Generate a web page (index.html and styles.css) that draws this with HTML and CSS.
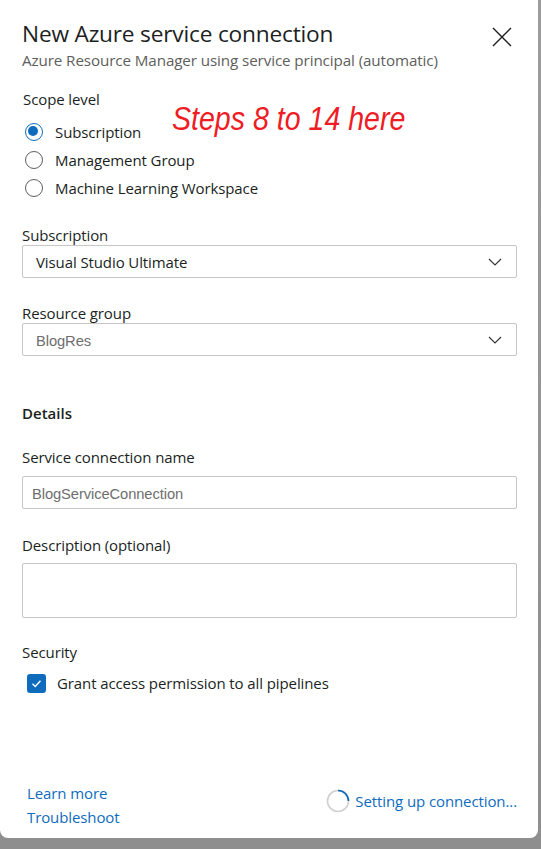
FILE: index.html
```html
<!DOCTYPE html>
<html>
<head>
<meta charset="utf-8">
<link rel="stylesheet" href="styles.css">
</head>
<body>
<div class="panel">
  <div class="header">
    <div class="titles">
      <h1 class="title">New Azure service connection</h1>
      <div class="subtitle">Azure Resource Manager using service principal (automatic)</div>
    </div>
    <svg class="close" width="20" height="20" viewBox="0 0 20 20"><path d="M1 1 L19 19 M19 1 L1 19" stroke="#201f1e" stroke-width="1.4" fill="none"/></svg>
  </div>

  <div class="scope">
    <div class="label scope-label">Scope level</div>
    <div class="annot">Steps 8 to 14 here</div>
    <div class="radios">
      <div class="radio-row"><span class="radio checked"></span><span class="rtext">Subscription</span></div>
      <div class="radio-row"><span class="radio"></span><span class="rtext">Management Group</span></div>
      <div class="radio-row"><span class="radio"></span><span class="rtext">Machine Learning Workspace</span></div>
    </div>
  </div>

  <div class="field f-sub">
    <div class="label">Subscription</div>
    <div class="box select">
      <span class="value">Visual Studio Ultimate</span>
      <svg class="chev" width="14" height="8" viewBox="0 0 14 8"><path d="M1 1 L7 7 L13 1" stroke="#323130" stroke-width="1.1" fill="none"/></svg>
    </div>
  </div>

  <div class="field f-rg">
    <div class="label">Resource group</div>
    <div class="box select">
      <span class="value gray">BlogRes</span>
      <svg class="chev" width="14" height="8" viewBox="0 0 14 8"><path d="M1 1 L7 7 L13 1" stroke="#323130" stroke-width="1.1" fill="none"/></svg>
    </div>
  </div>

  <div class="section">Details</div>

  <div class="field f-name">
    <div class="label">Service connection name</div>
    <div class="box input"><span class="value gray name">BlogServiceConnection</span></div>
  </div>

  <div class="field f-desc">
    <div class="label">Description (optional)</div>
    <div class="box textarea"></div>
  </div>

  <div class="field f-sec">
    <div class="label">Security</div>
    <div class="check-row">
      <span class="checkbox"><svg width="13" height="13" viewBox="0 0 13 13"><path d="M2.5 6.8 L5.2 9.4 L10.5 3.8" stroke="#fff" stroke-width="1.4" fill="none"/></svg></span>
      <span class="ctext">Grant access permission to all pipelines</span>
    </div>
  </div>

  <div class="footer">
    <div class="links">
      <a class="link">Learn more</a>
      <a class="link">Troubleshoot</a>
    </div>
    <div class="status">
      <svg class="spinner" width="24" height="24" viewBox="0 0 24 24">
        <circle cx="12" cy="12" r="10.5" stroke="#d2d0ce" stroke-width="1.6" fill="none"/>
        <path d="M12 1.5 A10.5 10.5 0 0 1 22.5 12" stroke="#0f6cbd" stroke-width="1.6" fill="none"/>
      </svg>
      <span class="stext">Setting up connection...</span>
    </div>
  </div>
</div>
</body>
</html>
```
FILE: styles.css
```css
html, body {
  margin: 0;
  padding: 0;
}
body {
  width: 541px;
  height: 849px;
  background: linear-gradient(#9c9c9c, #8e8e8e);
  font-family: "Open Sans", "Noto Sans", sans-serif;
  color: #201f1e;
  overflow: hidden;
}
.panel {
  width: 538px;
  height: 838px;
  background: #fff;
  border-radius: 0 0 8px 8px;
  box-sizing: border-box;
  padding: 20px 21px 9px 22px;
  display: flex;
  flex-direction: column;
  position: relative;
}
.header {
  display: flex;
  justify-content: space-between;
  align-items: flex-start;
}
.title {
  margin: 0;
  font-size: 22.7px;
  font-weight: 400;
  line-height: 28px;
  letter-spacing: -0.2px;
}
.subtitle {
  font-size: 15.2px;
  line-height: 24px;
  color: #605e5c;
  letter-spacing: -0.1px;
}
.close {
  margin-top: 7px;
  margin-right: 5px;
}
.label {
  font-size: 15px;
  line-height: 20px;
  letter-spacing: -0.1px;
}
.scope {
  margin-top: 17px;
}
.scope-label {
  padding-left: 1px;
}
.annot {
  position: absolute;
  left: 172px;
  top: 99px;
  font-family: "Liberation Sans", Arial, sans-serif;
  font-style: italic;
  font-size: 34px;
  line-height: 38px;
  color: #ee1c25;
  transform: scaleX(0.84);
  transform-origin: left center;
  white-space: nowrap;
}
.radios {
  margin-top: 9px;
}
.radio-row {
  display: flex;
  align-items: center;
  height: 28px;
}
.radio {
  width: 18px;
  height: 18px;
  border: 1.2px solid #605e5c;
  border-radius: 50%;
  margin-left: 3px;
  box-sizing: border-box;
  position: relative;
}
.radio.checked {
  border: 1.6px solid #0f6cbd;
}
.radio.checked::after {
  content: "";
  position: absolute;
  left: 2.4px;
  top: 2.4px;
  width: 10px;
  height: 10px;
  border-radius: 50%;
  background: #0f6cbd;
}
.rtext {
  margin-left: 12px;
  font-size: 15px;
  letter-spacing: -0.1px;
}
.field {
  display: flex;
  flex-direction: column;
}
.f-sub { margin-top: 23px; }
.f-rg { margin-top: 25px; }
.section {
  margin-top: 47px;
  font-size: 15px;
  line-height: 20px;
  font-weight: 600;
}
.f-name { margin-top: 24px; }
.f-name .label { margin-bottom: 9px; }
.f-desc { margin-top: 26px; }
.f-desc .label { margin-bottom: 8px; }
.f-sec { margin-top: 24px; }
.box {
  border: 1px solid #c8c6c4;
  border-radius: 2px;
  box-sizing: border-box;
  height: 33px;
  display: flex;
  align-items: center;
  justify-content: space-between;
}
.select {
  padding: 0 14px 0 13px;
}
.input {
  padding: 0 9px;
}
.textarea {
  height: 55px;
}
.value {
  font-size: 15px;
  letter-spacing: -0.1px;
}
.value.gray {
  font-family: "Liberation Sans", Arial, sans-serif;
  color: #6e6e6e;
  font-size: 15.5px;
  margin-top: 2px;
  transform: scaleX(0.95);
  transform-origin: left center;
}
.chev {
  margin-top: 1px;
}
.check-row {
  display: flex;
  align-items: center;
  margin-top: 9px;
  height: 24px;
}
.checkbox {
  width: 19px;
  height: 19px;
  margin-left: 5px;
  border-radius: 3px;
  background: #0f6cbd;
  display: flex;
  align-items: center;
  justify-content: center;
}
.ctext {
  margin-left: 11px;
  font-size: 15px;
  letter-spacing: -0.1px;
}
.footer {
  margin-top: auto;
  display: flex;
  justify-content: space-between;
  align-items: center;
  padding-left: 5px;
}
.links {
  display: flex;
  flex-direction: column;
}
.link {
  color: #0f6cbd;
  font-size: 15px;
  line-height: 24px;
  letter-spacing: -0.1px;
}
.status {
  display: flex;
  align-items: center;
  margin-top: -8px;
  margin-right: 0;
}
.stext {
  margin-left: 5px;
  color: #0f6cbd;
  font-size: 15px;
  letter-spacing: -0.1px;
}
```
